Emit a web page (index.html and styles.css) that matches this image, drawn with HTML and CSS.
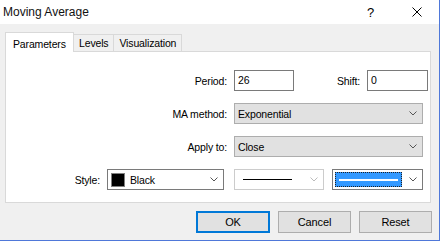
FILE: index.html
```html
<!DOCTYPE html>
<html lang="en">
<head>
    <meta charset="UTF-8">
    <title>Moving Average</title>
    <link rel="stylesheet" href="styles.css">
</head>
<body>
    <div class="window">
        <div class="titlebar">
            <span class="title">Moving Average</span>
            <span class="help">?</span>
            <span class="close">
                <svg width="10" height="10" viewBox="0 0 10 10"><path d="M0.5 0.5 L9.5 9.5 M9.5 0.5 L0.5 9.5" stroke="#000" stroke-width="1"/></svg>
            </span>
        </div>

        <div class="client">
            <div class="tabs">
                <div class="tab active">Parameters</div>
                <div class="tab">Levels</div>
                <div class="tab">Visualization</div>
            </div>

            <div class="panel">
                <div class="row">
                    <span class="lbl">Period:</span>
                    <div class="edit period">26</div>
                    <span class="lbl shift-lbl">Shift:</span>
                    <div class="edit shift">0</div>
                </div>

                <div class="row">
                    <span class="lbl">MA method:</span>
                    <div class="combo wide">
                        <span class="value">Exponential</span>
                        <svg class="chev" width="8" height="5" viewBox="0 0 8 5"><path d="M0.5 0.5 L4 4 L7.5 0.5" fill="none" stroke="#555" stroke-width="1"/></svg>
                    </div>
                </div>

                <div class="row">
                    <span class="lbl">Apply to:</span>
                    <div class="combo wide">
                        <span class="value">Close</span>
                        <svg class="chev" width="8" height="5" viewBox="0 0 8 5"><path d="M0.5 0.5 L4 4 L7.5 0.5" fill="none" stroke="#555" stroke-width="1"/></svg>
                    </div>
                </div>

                <div class="row style-row">
                    <span class="lbl style-lbl">Style:</span>
                    <div class="combo white color">
                        <span class="swatch"></span>
                        <span class="value">Black</span>
                        <svg class="chev" width="8" height="5" viewBox="0 0 8 5"><path d="M0.5 0.5 L4 4 L7.5 0.5" fill="none" stroke="#555" stroke-width="1"/></svg>
                    </div>
                    <div class="combo disabled linestyle">
                        <span class="line"></span>
                        <svg class="chev" width="8" height="5" viewBox="0 0 8 5"><path d="M0.5 0.5 L4 4 L7.5 0.5" fill="none" stroke="#bbb" stroke-width="1"/></svg>
                    </div>
                    <div class="combo white linewidth">
                        <span class="focus"><span class="thick"></span></span>
                        <svg class="chev" width="8" height="5" viewBox="0 0 8 5"><path d="M0.5 0.5 L4 4 L7.5 0.5" fill="none" stroke="#555" stroke-width="1"/></svg>
                    </div>
                </div>
            </div>

            <div class="buttons">
                <button class="btn default">OK</button>
                <button class="btn">Cancel</button>
                <button class="btn">Reset</button>
            </div>
        </div>
    </div>
</body>
</html>
```

FILE: styles.css
```css
body { margin: 0; font-family: "Liberation Sans", Arial, sans-serif; font-size: 10.5px; letter-spacing: -0.15px; color: #000; background: #fff; }
.window { width: 439px; height: 240px; border-right: 1px solid #4f78d9; border-bottom: 1px solid #4f78d9; background: #f0f0f0; display: flex; flex-direction: column; }

.titlebar { height: 24px; background: #fff; display: flex; align-items: center; }
.title { font-size: 12px; letter-spacing: 0; margin-left: 3px; flex: 1; color: #111; }
.help { font-size: 13px; width: 6px; margin-right: 39px; }
.close { width: 10px; height: 10px; margin-right: 17px; display: flex; }

.client { flex: 1; }
.tabs { display: flex; align-items: flex-end; height: 19px; margin-top: 8px; padding-left: 5px; }
.tab { height: 16px; line-height: 17px; border: 1px solid #d9d9d9; border-bottom: none; padding: 0 5px; background: #f0f0f0; }
.tab.active { height: 19px; line-height: 22px; background: #fff; padding: 0 7px; margin-bottom: -1px; position: relative; z-index: 1; width: 53px; }
.tab.active + .tab { border-left: none; }
.tab + .tab + .tab { border-left: none; }

.panel { margin-left: 5px; width: 424px; height: 132px; background: #fff; border: 1px solid #d9d9d9; display: flex; flex-direction: column; gap: 12px; padding-top: 18px; }
.row { display: flex; align-items: center; height: 21px; }
.lbl { width: 221px; text-align: right; margin-right: 7px; }
.shift-lbl { width: auto; margin-left: 43px; margin-right: 7px; }
.style-lbl { width: 94px; }

.edit { line-height: 19px; border: 1px solid #7a7a7a; background: #fff; padding: 0 3px; box-sizing: border-box; height: 21px; }
.edit.period { width: 60px; }
.edit.shift { width: 61px; }

.combo { height: 21px; box-sizing: border-box; border: 1px solid #adadad; background: #e1e1e1; display: flex; align-items: center; padding-left: 3px; }
.combo .value { flex: 1; }
.combo .chev { margin-right: 5px; }
.combo.wide { width: 189px; }
.combo.white { background: #fff; border-color: #7a7a7a; }
.combo.color { width: 117px; }
.swatch { width: 12px; height: 12px; background: #000; border: 1px solid #808080; margin-right: 5px; }
.combo.disabled { background: #fff; border-color: #cccccc; width: 90px; margin-left: 10px; }
.line { flex: 1; height: 1px; background: #000; margin: 0 18px 0 5px; }
.combo.linewidth { width: 91px; margin-left: 8px; padding-left: 2px; }
.focus { flex: 1; height: 15px; box-sizing: border-box; background: #3399ff; border: 1px dotted #222; display: flex; align-items: center; padding: 0 3px; margin-right: 7px; }
.thick { flex: 1; height: 2px; background: #fff; }

.buttons { display: flex; justify-content: flex-end; gap: 8px; padding-right: 7px; margin-top: 8px; }
.btn { font-family: inherit; font-size: 11px; letter-spacing: -0.15px; height: 22px; width: 73px; border: 1px solid #adadad; background: #e1e1e1; padding: 0; color: #000; }
.btn.default { border: 2px solid #0078d7; width: 74px; }
```
